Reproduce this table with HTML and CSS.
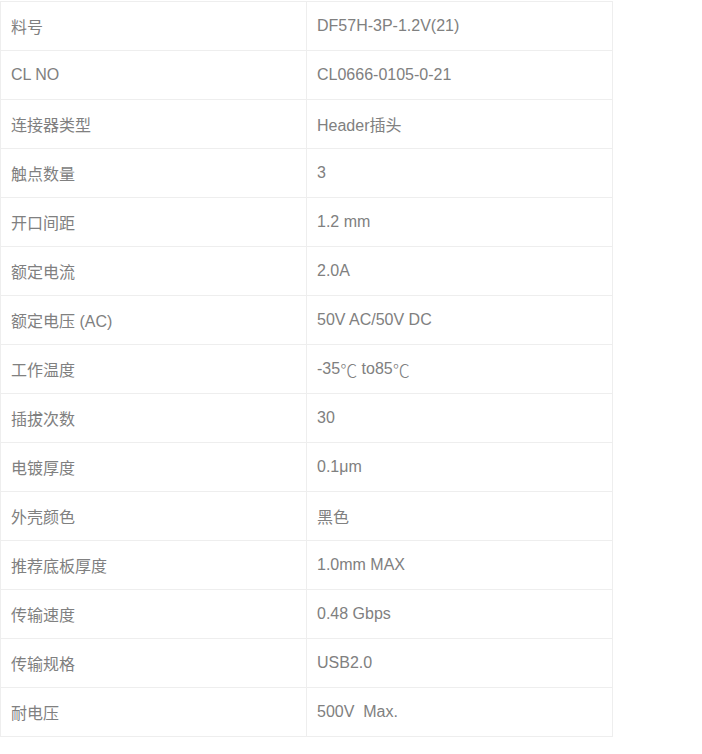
FILE: index.html
```html
<!DOCTYPE html>
<html lang="zh">
<head>
<meta charset="utf-8">
<title>参数</title>
<link rel="stylesheet" href="styles.css">
</head>
<body>
<div class="spec">
  <div class="cell">料号</div><div class="cell">DF57H-3P-1.2V(21)</div>
  <div class="cell">CL NO</div><div class="cell">CL0666-0105-0-21</div>
  <div class="cell">连接器类型</div><div class="cell">Header插头</div>
  <div class="cell">触点数量</div><div class="cell">3</div>
  <div class="cell">开口间距</div><div class="cell">1.2 mm</div>
  <div class="cell">额定电流</div><div class="cell">2.0A</div>
  <div class="cell">额定电压 (AC)</div><div class="cell">50V AC/50V DC</div>
  <div class="cell">工作温度</div><div class="cell">-35<span class="deg">℃</span> to85<span class="deg">℃</span></div>
  <div class="cell">插拔次数</div><div class="cell">30</div>
  <div class="cell">电镀厚度</div><div class="cell">0.1μm</div>
  <div class="cell">外壳颜色</div><div class="cell">黑色</div>
  <div class="cell">推荐底板厚度</div><div class="cell">1.0mm MAX</div>
  <div class="cell">传输速度</div><div class="cell">0.48 Gbps</div>
  <div class="cell">传输规格</div><div class="cell">USB2.0</div>
  <div class="cell">耐电压</div><div class="cell">500V&nbsp; Max.</div>
</div>
</body>
</html>
```
FILE: styles.css
```css
html, body {
  margin: 0;
  padding: 0;
  background: #fff;
}
body {
  padding-top: 1px;
  font-family: "Liberation Sans", Arial, "Noto Sans CJK SC", sans-serif;
  font-size: 16px;
  color: #808080;
}
.spec {
  display: grid;
  grid-template-columns: 306px 306px;
  width: 612px;
  border-top: 1px solid #eeeeee;
  border-left: 1px solid #eeeeee;
}
.cell {
  box-sizing: border-box;
  height: 49px;
  padding: 0 10px;
  display: flex;
  align-items: center;
  border-right: 1px solid #eeeeee;
  border-bottom: 1px solid #eeeeee;
  white-space: pre;
}
.deg {
  font-family: "Noto Sans CJK SC", sans-serif;
  font-size: 17px;
  font-weight: 300;
  line-height: 1;
}
```
